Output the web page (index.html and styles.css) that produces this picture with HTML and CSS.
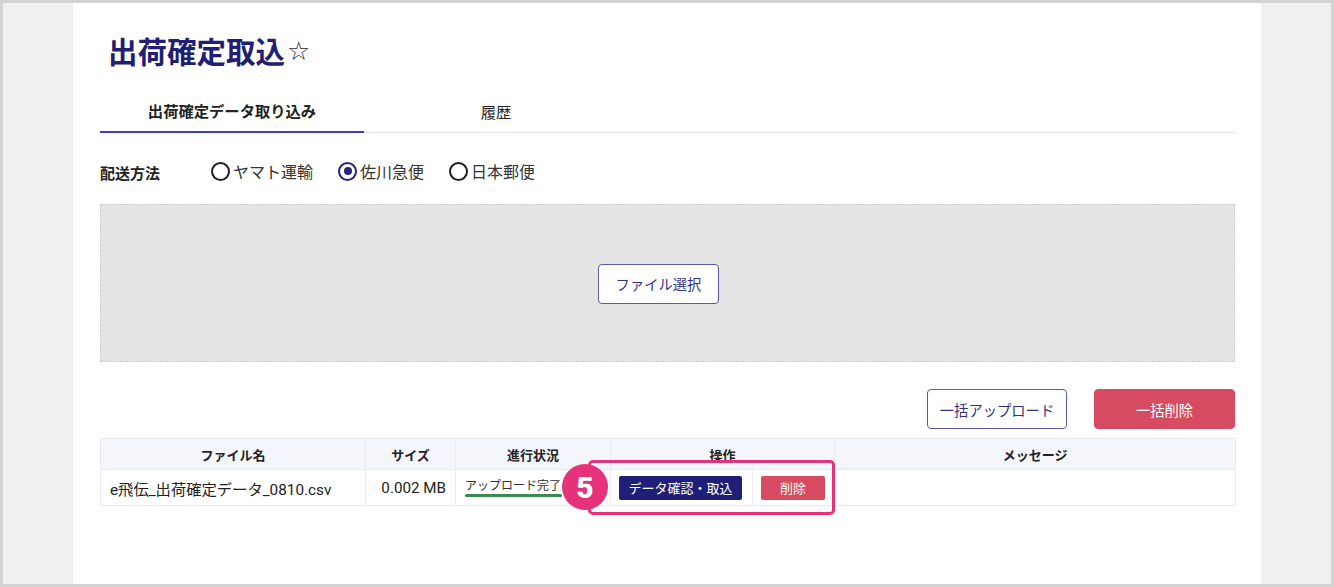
FILE: index.html
```html
<!DOCTYPE html>
<html lang="ja">
<head>
<meta charset="utf-8">
<title>出荷確定取込</title>
<link rel="stylesheet" href="styles.css">
</head>
<body>
<div class="frame">
  <div class="panel">
    <h1 class="title">出荷確定取込<span class="star">☆</span></h1>

    <div class="tabs">
      <div class="tab active">出荷確定データ取り込み</div>
      <div class="tab">履歴</div>
    </div>

    <div class="method-row">
      <span class="method-label">配送方法</span>
      <label class="radio"><span class="radio-circle"></span>ヤマト運輸</label>
      <label class="radio"><span class="radio-circle checked"></span>佐川急便</label>
      <label class="radio"><span class="radio-circle"></span>日本郵便</label>
    </div>

    <div class="dropzone">
      <button class="btn btn-outline btn-file">ファイル選択</button>
    </div>

    <div class="actions">
      <button class="btn btn-outline btn-upload">一括アップロード</button>
      <button class="btn btn-danger btn-bulkdel">一括削除</button>
    </div>

    <div class="table-wrap">
      <table class="files">
        <colgroup>
          <col class="w-name">
          <col class="w-size">
          <col class="w-status">
          <col class="w-opa">
          <col class="w-opb">
          <col class="w-msg">
        </colgroup>
        <thead>
          <tr>
            <th>ファイル名</th>
            <th>サイズ</th>
            <th>進行状況</th>
            <th colspan="2">操作</th>
            <th>メッセージ</th>
          </tr>
        </thead>
        <tbody>
          <tr>
            <td class="c-name">e飛伝_出荷確定データ_0810.csv</td>
            <td class="num">0.002 MB</td>
            <td class="c-status"><span class="status-text">アップロード完了</span><span class="progress"></span></td>
            <td class="c-op"><button class="btn-sm btn-navy">データ確認・取込</button></td>
            <td class="c-op"><button class="btn-sm btn-red">削除</button></td>
            <td></td>
          </tr>
        </tbody>
      </table>
      <div class="highlight"></div>
      <div class="step">5</div>
    </div>
  </div>
</div>
</body>
</html>
```

FILE: styles.css
```css
* { box-sizing: border-box; }
html, body { margin: 0; padding: 0; }
body {
  font-family: "Noto Sans CJK JP", "Noto Sans", sans-serif;
  color: #222;
}
.frame {
  width: 1334px;
  height: 587px;
  border: 3px solid #d3d3d3;
  background: #f0f0f0;
  padding-left: 70px;
}
.panel {
  width: 1188px;
  height: 100%;
  background: #fff;
  padding: 30px 26px 0 27px;
}
.title {
  margin: 0;
  padding-left: 8px;
  font-size: 29.5px;
  line-height: 35px;
  font-weight: 700;
  color: #221e72;
  display: flex;
  align-items: center;
}
.star {
  font-family: "DejaVu Sans", sans-serif;
  font-weight: 400;
  font-size: 26px;
  color: #2a2a2a;
  margin-left: 2px;
  position: relative;
  top: 1px;
}
.tabs {
  margin-top: 24px;
  display: flex;
  border-bottom: 1px solid #e3e3e3;
}
.tab {
  width: 264px;
  height: 40px;
  display: flex;
  align-items: center;
  justify-content: center;
  font-size: 15.3px;
  color: #222;
  padding-bottom: 3px;
}
.tab.active {
  font-weight: 700;
  border-bottom: 2px solid #3a3ecf;
  margin-bottom: -1px;
  height: 41px;
}
.method-row {
  margin-top: 21px;
  height: 34px;
  display: flex;
  align-items: center;
}
.method-label {
  font-size: 15px;
  font-weight: 700;
  width: 111px;
  padding-top: 3px;
}
.radio {
  display: flex;
  align-items: center;
  font-size: 16px;
  color: #333;
  margin-right: 25px;
}
.radio-circle {
  width: 19px;
  height: 19px;
  border: 2px solid #1e1e1e;
  border-radius: 50%;
  margin-right: 3px;
  position: relative;
}
.radio-circle.checked {
  border-color: #26247a;
}
.radio-circle.checked::after {
  content: "";
  position: absolute;
  left: 3.5px;
  top: 3.5px;
  width: 8px;
  height: 8px;
  border-radius: 50%;
  background: #26247a;
}
.dropzone {
  margin-top: 16px;
  height: 158px;
  background: #e4e4e4;
  border: 1px dashed #cfcfcf;
  display: flex;
  align-items: center;
  justify-content: center;
}
.btn {
  font-family: inherit;
  font-size: 14.3px;
  height: 40px;
  border-radius: 4px;
  cursor: pointer;
}
.btn-outline {
  background: #fff;
  border: 1px solid #5b5bab;
  color: #34327f;
}
.btn-file {
  width: 121px;
  margin-top: 1px;
  margin-right: 18px;
}
.actions {
  margin-top: 27px;
  display: flex;
  justify-content: flex-end;
  gap: 27px;
}
.btn-upload { width: 140px; }
.btn-danger {
  background: #d64b5f;
  border: 1px solid #d64b5f;
  color: #fff;
}
.btn-bulkdel { width: 141px; }
.table-wrap {
  margin-top: 9px;
  position: relative;
}
.files {
  width: 1135px;
  border-collapse: collapse;
  table-layout: fixed;
  font-size: 14px;
}
.w-name { width: 265px; }
.w-size { width: 90px; }
.w-status { width: 155px; }
.w-opa { width: 142px; }
.w-opb { width: 82px; }
.w-msg { width: 401px; }
.files th, .files td {
  border: 1px solid #e9e9ef;
}
.files th {
  height: 31px;
  background: #f5f6fb;
  font-size: 13px;
  font-weight: 700;
  color: #222;
  text-align: center;
  padding: 0;
}
.files td {
  height: 36px;
  padding: 0 9px;
  color: #222;
}
td.c-name { font-family: "Roboto", "Noto Sans CJK JP", sans-serif; font-size: 15.3px; }
td.num { text-align: right; font-family: "Roboto", sans-serif; font-size: 15.2px; }
td.c-status { position: relative; }
.status-text {
  display: block;
  font-size: 12px;
  line-height: 14px;
  margin-top: -6px;
  color: #333;
}
.progress {
  position: absolute;
  left: 9px;
  top: 24px;
  width: 97px;
  height: 3px;
  background: #3a8a4e;
  border-radius: 2px;
}
td.c-op { padding-left: 8px; }
.btn-sm {
  font-family: inherit;
  font-size: 13px;
  height: 24px;
  border: none;
  border-radius: 2px;
  color: #fff;
  padding: 0;
  display: block;
}
.btn-navy { background: #1f1f78; width: 123px; }
.btn-red { background: #d64b5f; width: 64px; }
.highlight {
  position: absolute;
  left: 488px;
  top: 22px;
  width: 247px;
  height: 55px;
  border: 3px solid #e6327b;
  border-radius: 5px;
  pointer-events: none;
}
.step {
  position: absolute;
  left: 462px;
  top: 26px;
  width: 46px;
  height: 46px;
  border-radius: 50%;
  background: #e6327b;
  color: #fff;
  font-family: "Roboto", "Noto Sans", sans-serif;
  font-weight: 900;
  font-size: 30px;
  display: flex;
  align-items: center;
  justify-content: center;
}
```
